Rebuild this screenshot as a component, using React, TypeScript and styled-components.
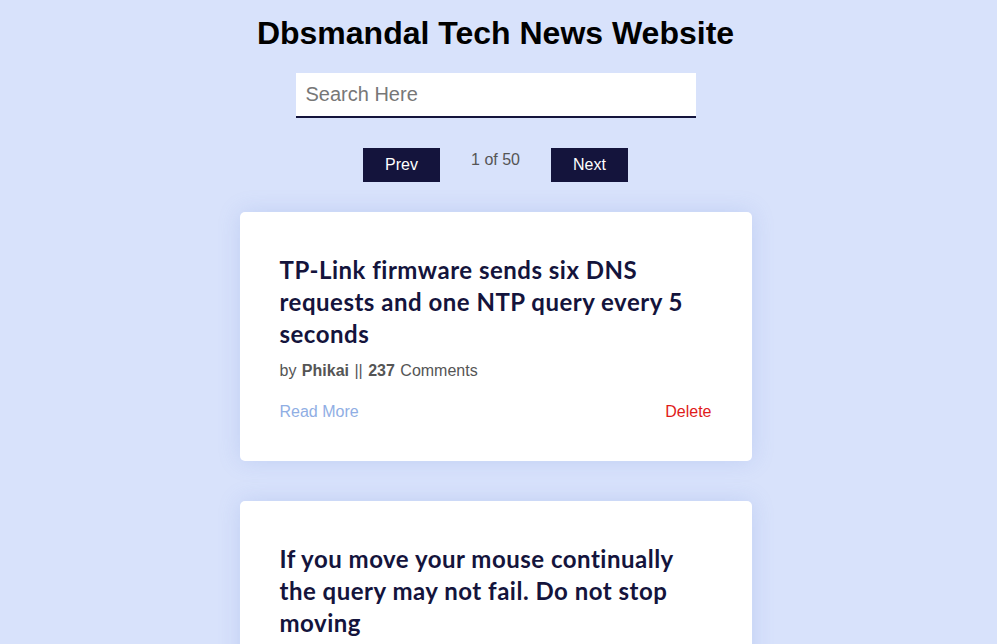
import React from "react";
import styled, { createGlobalStyle } from "styled-components";

const Global = createGlobalStyle`
  html, body { margin: 0; padding: 0; }
  body {
    background: #d8e2fb;
    font-family: "Liberation Sans", Arial, sans-serif;
  }
`;

const Page = styled.main`
  display: flex;
  flex-direction: column;
  align-items: center;
  padding: 15px 6px 0 0;
`;

const Title = styled.h1`
  margin: 0;
  font-size: 32px;
  font-weight: 700;
  color: #000;
  line-height: 37px;
`;

const Search = styled.input`
  margin-top: 21px;
  width: 400px;
  height: 45px;
  box-sizing: border-box;
  border: none;
  border-bottom: 2px solid #14143c;
  background: #fff;
  padding: 0 10px;
  font-family: "Liberation Sans", Arial, sans-serif;
  font-size: 20px;
  color: #333;
  outline: none;
  &::placeholder { color: #777; }
`;

const Pager = styled.div`
  display: flex;
  align-items: flex-start;
  gap: 31px;
  margin-top: 30px;
`;

const PageButton = styled.button`
  width: 77px;
  height: 34px;
  background: #14143c;
  color: #fff;
  border: none;
  font-family: "Liberation Sans", Arial, sans-serif;
  font-size: 16px;
  cursor: pointer;
`;

const PageInfo = styled.span`
  font-size: 16px;
  color: #555;
  line-height: 18px;
  margin-top: 3px;
`;

const List = styled.section`
  display: flex;
  flex-direction: column;
  gap: 40px;
  margin-top: 30px;
`;

const Card = styled.article`
  width: 512px;
  box-sizing: border-box;
  padding: 42px 40px 39px;
  background: #fff;
  border-radius: 5px;
  box-shadow: 0 0 22px rgba(110, 140, 220, 0.22);
`;

const CardTitle = styled.h2`
  margin: 0;
  font-family: "Lato", "Open Sans", sans-serif;
  font-size: 24px;
  font-weight: 700;
  letter-spacing: 0.5px;
  line-height: 32px;
  color: #14143c;
`;

const Meta = styled.p`
  margin: 11px 0 0;
  font-size: 16px;
  line-height: 20px;
  color: #555;
  word-spacing: 1px;
  b { font-weight: 700; }
`;

const Actions = styled.div`
  display: flex;
  justify-content: space-between;
  margin-top: 21px;
  font-size: 16px;
  line-height: 20px;
`;

const ActionLink = styled.a<{ $danger?: boolean }>`
  color: ${(p) => (p.$danger ? "#e01b1b" : "#90aee4")};
  text-decoration: none;
  cursor: pointer;
`;

const stories = [
  { title: "TP-Link firmware sends six DNS requests and one NTP query every 5 seconds", author: "Phikai", comments: 237 },
  { title: "If you move your mouse continually the query may not fail. Do not stop moving", author: "luu", comments: 98 },
];

export default function App() {
  return (
    <>
      <Global />
      <Page>
        <Title>Dbsmandal Tech News Website</Title>
        <Search type="text" placeholder="Search Here" />
        <Pager>
          <PageButton>Prev</PageButton>
          <PageInfo>1 of 50</PageInfo>
          <PageButton>Next</PageButton>
        </Pager>
        <List>
          {stories.map((s) => (
            <Card key={s.title}>
              <CardTitle>{s.title}</CardTitle>
              <Meta>
                by <b>{s.author}</b> || <b>{s.comments}</b> Comments
              </Meta>
              <Actions>
                <ActionLink>Read More</ActionLink>
                <ActionLink $danger>Delete</ActionLink>
              </Actions>
            </Card>
          ))}
        </List>
      </Page>
    </>
  );
}
